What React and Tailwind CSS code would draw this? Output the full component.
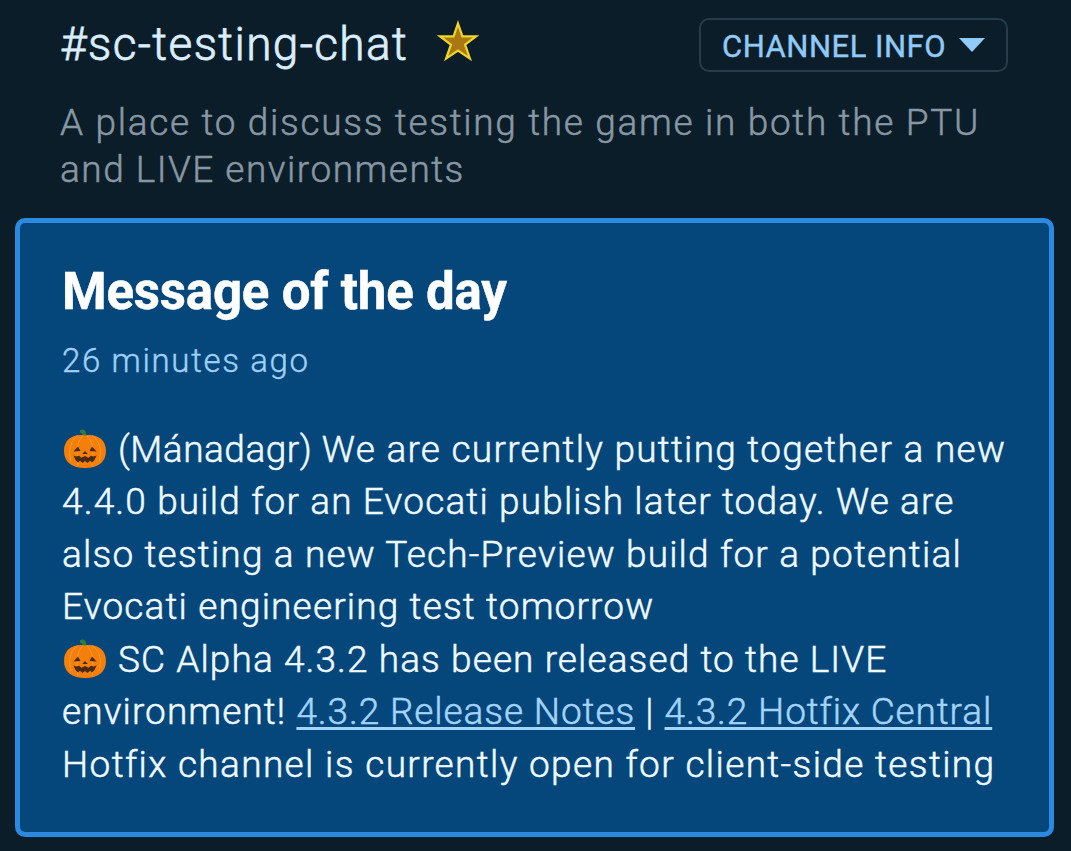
import React from "react";

const Star = () => (
  <svg className="w-[42px] h-[42px] shrink-0" viewBox="0 0 42 42">
    <path
      d="M21 3.5 L25.4 16.3 L39 16.4 L28.1 24.6 L32.9 38.6 L21 30.6 L9.1 38.6 L13.9 24.6 L3 16.4 L16.6 16.3 Z"
      fill="#a97812"
      stroke="#efd52c"
      strokeWidth="2.2"
    />
  </svg>
);

const Pumpkin = () => (
  <svg
    className="inline-block w-[42px] h-[40px] ml-0.5 mr-3 align-[-7px]"
    viewBox="0 0 42 40"
  >
    <path
      d="M16 1.5 C18 0 20 0 21.5 2.5 C22.5 4.5 22.3 6 22.5 8.5 L18.5 9 C19 6 18.5 4 16 3.5 Z"
      fill="#2f7d3f"
    />
    <path
      d="M21 6.5 C31 4.5 42 9 42 22 C42 33 34 39 21 39 C8 39 0 33 0 22 C0 9 11 4.5 21 6.5 Z"
      fill="#f57f0b"
    />
    <g fill="none" stroke="#fd9a2b" strokeWidth="1">
      <path d="M14 6.8 C6 11 4 22 7 32" />
      <path d="M19 7 C13 12 12 22 14 37" />
      <path d="M23 7 C29 12 30 22 28 37" />
      <path d="M28 6.8 C36 11 38 22 35 32" />
    </g>
    <g fill="#4a2b12">
      <path d="M14 17.5 L9.5 22.5 L16.5 22 Z" />
      <path d="M28 17.5 L32.5 22.5 L25.5 22 Z" />
      <path d="M21 22 L18.3 25 L23.8 25 Z" />
      <path d="M9.5 26.5 L12.5 27.5 L15 26.7 L17.5 28.8 L21 27 L24.5 28.8 L27 26.7 L29.5 27.5 L32.5 26.5 L30.5 31 L28 33.5 L26 31.8 L23.5 34 L21 32 L18.5 34 L16 31.8 L14 33.5 L11.5 31 Z" />
    </g>
  </svg>
);

const NoteLink = ({ children }) => (
  <a
    href="#"
    className="text-[#a3d4fb] tracking-[0.88px] underline decoration-[3px] underline-offset-[3px] [text-decoration-skip-ink:none]"
  >
    {children}
  </a>
);

const ChannelHeader = () => (
  <header className="h-[218px] pl-[60px] pr-[63px] pt-[18px]">
    <div className="flex items-center h-[54px]">
      <h1 className="-mt-0.5 w-[347px] text-[46px] leading-[54px] font-light tracking-[1.35px] text-[#d9edfd] whitespace-nowrap [-webkit-text-stroke:0.8px]">
        #sc-testing-chat
      </h1>
      <div className="ml-[30px] -mt-2">
        <Star />
      </div>
      <button className="ml-auto flex items-center w-[309px] h-[54px] pl-[21px] border-2 border-[#263c4a] rounded-[10px] text-[31px] text-[#91c9f7] whitespace-nowrap">
        <span className="mt-1 w-[223px] tracking-[0.5px] [-webkit-text-stroke:0.4px]">
          CHANNEL INFO
        </span>
        <svg className="ml-[14px] w-[26px] h-[14px]" viewBox="0 0 26 14">
          <path d="M0 0 H26 L13 14 Z" fill="#91c9f7" />
        </svg>
      </button>
    </div>
    <p className="mt-[27px] text-[37px] leading-[47px] font-light text-[#8797a3] whitespace-nowrap [-webkit-text-stroke:0.5px]">
      <span className="block tracking-[1.68px]">
        A place to discuss testing the game in both the PTU
      </span>
      <span className="block tracking-[1.48px]">and LIVE environments</span>
    </p>
  </header>
);

const MessageOfTheDay = () => (
  <section className="ml-[15px] w-[1039px] h-[619px] border-[5px] border-[#2c89e0] rounded-[10px] bg-[#06477b] pl-[42px] pt-[39px] whitespace-nowrap">
    <h2 className="text-[51px] leading-[60px] font-bold text-white tracking-[-0.2px] [-webkit-text-stroke:0.5px]">
      Message of the day
    </h2>
    <p className="mt-[19px] text-[33px] leading-[40px] font-light text-[#9fd0f8] tracking-[1.65px] [-webkit-text-stroke:0.4px]">
      26 minutes ago
    </p>
    <div className="mt-[43px] text-[37px] leading-[52.45px] font-light text-[#eefaff] [-webkit-text-stroke:0.5px]">
      <div className="tracking-[1.26px]">
        <Pumpkin />
        <span className="tracking-[0.5px]">(Mánadagr) </span>
        We are currently putting together a new
      </div>
      <div className="tracking-[1.15px]">
        4.4.0 build for an Evocati publish later today. We are
      </div>
      <div className="tracking-[1.17px]">
        also testing a new Tech-Preview build for a potential
      </div>
      <div className="tracking-[1.15px]">Evocati engineering test tomorrow</div>
      <div className="tracking-[1.09px]">
        <Pumpkin />
        SC Alpha 4.3.2 has been released to the LIVE
      </div>
      <div className="tracking-[1.08px]">
        environment! <NoteLink>4.3.2 Release Notes</NoteLink> |{" "}
        <NoteLink>4.3.2 Hotfix Central</NoteLink>
      </div>
      <div className="tracking-[1.35px]">
        Hotfix channel is currently open for client-side testing
      </div>
    </div>
  </section>
);

const App = () => {
  return (
    <div className="w-full h-[851px] overflow-hidden bg-[#0b1d28] font-[Roboto,sans-serif]">
      <ChannelHeader />
      <MessageOfTheDay />
    </div>
  );
};

export default App;
